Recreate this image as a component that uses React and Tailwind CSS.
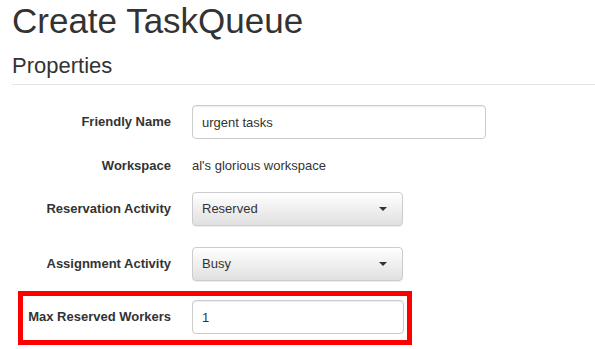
import React from "react";

const FONT = { fontFamily: '"Liberation Sans", Arial, Helvetica, sans-serif' };

function Label({ children, className = "w-[159px]" }) {
  return (
    <label className={`${className} shrink-0 text-right text-[13px] font-bold text-[#333]`}>
      {children}
    </label>
  );
}

function TextInput({ value, width }) {
  return (
    <input
      type="text"
      defaultValue={value}
      className={`${width} h-[34px] rounded-[4px] border border-[#ccc] bg-white pl-[9px] text-[13px] text-[#333] shadow-[inset_0_1px_1px_rgba(0,0,0,0.075)] outline-none`}
    />
  );
}

function Dropdown({ value }) {
  return (
    <button
      type="button"
      className="flex h-[34px] w-[211px] items-center justify-between rounded-[4px] border border-[#ccc] bg-gradient-to-b from-white to-[#e0e0e0] pl-[9px] pr-[15px] text-[13px] text-[#333] shadow-[0_1px_1px_rgba(0,0,0,0.075)]"
    >
      <span>{value}</span>
      <span className="h-0 w-0 border-x-4 border-t-4 border-x-transparent border-t-[#333]" />
    </button>
  );
}

export default function App() {
  return (
    <div className="min-h-[349px] w-[595px] bg-white pl-[12px] text-[#333]" style={FONT}>
      <h1 className="pt-[2px] text-[35px] font-normal leading-[38px]">Create TaskQueue</h1>
      <h3 className="mt-[14px] text-[22px] font-normal leading-[24px]">Properties</h3>
      <hr className="mt-[6px] border-t border-[#e5e5e5]" />

      <form className="mt-[20px] flex flex-col">
        {/* friendly name */}
        <div className="flex items-center gap-[21px]">
          <Label>Friendly Name</Label>
          <TextInput value="urgent tasks" width="w-[294px]" />
        </div>

        {/* workspace (static) */}
        <div className="mt-[10px] flex h-[34px] items-center gap-[21px]">
          <Label>Workspace</Label>
          <span className="text-[13px]">al's glorious workspace</span>
        </div>

        <div className="mt-[9px] flex items-center gap-[21px]">
          <Label>Reservation Activity</Label>
          <Dropdown value="Reserved" />
        </div>

        <div className="mt-[21px] flex items-center gap-[21px]">
          <Label>Assignment Activity</Label>
          <Dropdown value="Busy" />
        </div>

        {/* highlighted row */}
        <div className="ml-[6px] mt-[10px] flex w-[394px] items-center gap-[21px] border-[5px] border-[#ff0000] pb-[6px] pt-[4px]">
          <Label className="w-[148px]">Max Reserved Workers</Label>
          <TextInput value="1" width="w-[212px]" />
        </div>
      </form>
    </div>
  );
}
